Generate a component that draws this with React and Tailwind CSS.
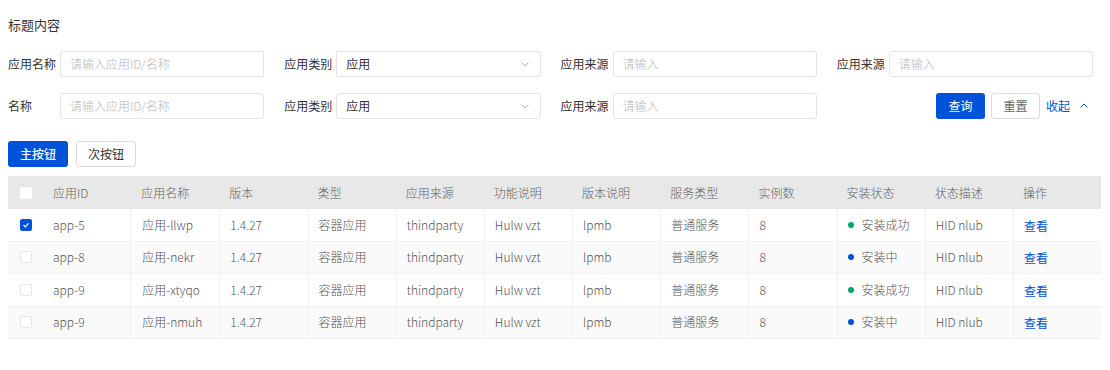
import React from "react";

const rows = [
  { id: "app-5", name: "应用-llwp", checked: true, status: "安装成功", ok: true },
  { id: "app-8", name: "应用-nekr", checked: false, status: "安装中", ok: false },
  { id: "app-9", name: "应用-xtyqo", checked: false, status: "安装成功", ok: true },
  { id: "app-9", name: "应用-nmuh", checked: false, status: "安装中", ok: false },
];

const headers = ["应用ID", "应用名称", "版本", "类型", "应用来源", "功能说明", "版本说明", "服务类型", "实例数", "安装状态", "状态描述", "操作"];

const Chevron = ({ up }) => (
  <svg width="12" height="12" viewBox="0 0 12 12" fill="none" className="shrink-0">
    <path d={up ? "M2.5 7.5L6 4l3.5 3.5" : "M2.5 4.5L6 8l3.5-3.5"} stroke={up ? "#0052d9" : "#b5b5b5"} strokeWidth="1" />
  </svg>
);

const Field = ({ label, placeholder, value, select }) => (
  <div className="flex items-center">
    <span className="w-[52px] shrink-0 text-[12px] text-[#333]">{label}</span>
    <div className="flex-1 h-[26px] border border-[#e3e3e3] rounded-[3px] px-[9px] flex items-center justify-between text-[12px]">
      {select ? (
        <>
          <span className="text-[#333]">{value}</span>
          <Chevron />
        </>
      ) : (
        <span className="text-[#b8b8b8] font-light">{placeholder}</span>
      )}
    </div>
  </div>
);

const Checkbox = ({ checked, header }) =>
  checked ? (
    <div className="w-[12px] h-[12px] rounded-[2px] bg-[#0052d9] flex items-center justify-center">
      <svg width="8" height="8" viewBox="0 0 8 8" fill="none">
        <path d="M1.5 4l1.8 1.8L6.6 2.4" stroke="white" strokeWidth="1.2" />
      </svg>
    </div>
  ) : (
    <div className={`w-[12px] h-[12px] rounded-[2px] bg-white ${header ? "border border-white" : "border border-[#e6e6e6]"}`} />
  );

export default function App() {
  return (
    <div className="w-[1110px] h-[370px] bg-white px-[8px] pt-[16px]" style={{ fontFamily: '"Noto Sans CJK SC", "Noto Sans", sans-serif' }}>
      <div className="text-[13px] text-[#333] leading-[18px]">标题内容</div>

      <div className="mt-[17px] grid grid-cols-4 gap-x-[20px] gap-y-[16px] w-[1085px]">
        <Field label="应用名称" placeholder="请输入应用ID/名称" />
        <Field label="应用类别" value="应用" select />
        <Field label="应用来源" placeholder="请输入" />
        <Field label="应用来源" placeholder="请输入" />
        <Field label="名称" placeholder="请输入应用ID/名称" />
        <Field label="应用类别" value="应用" select />
        <Field label="应用来源" placeholder="请输入" />
        <div className="flex items-center justify-end gap-[6px] pr-[3px]">
          <button className="h-[26px] w-[49px] rounded-[3px] bg-[#0052d9] text-white text-[12px]">查询</button>
          <button className="h-[26px] w-[49px] rounded-[3px] border border-[#dcdcdc] text-[#666] text-[12px]">重置</button>
          <button className="flex items-center gap-[8px] text-[#0052d9] text-[12px]">
            收起 <Chevron up />
          </button>
        </div>
      </div>

      <div className="mt-[22px] flex gap-[8px]">
        <button className="h-[26px] w-[60px] rounded-[3px] bg-[#0052d9] text-white text-[12px] font-medium">主按钮</button>
        <button className="h-[26px] w-[60px] rounded-[3px] border border-[#dcdcdc] text-[#333] text-[12px]">次按钮</button>
      </div>

      <div className="mt-[9px] w-[1093px] text-[12px] font-light">
        <div className="flex h-[33px] bg-[#e8e8e8] text-[#666]">
          <div className="w-[35px] shrink-0 flex items-center justify-center">
            <Checkbox header />
          </div>
          {headers.map((h) => (
            <div key={h} className="flex-1 flex items-center pl-[10px]">{h}</div>
          ))}
        </div>
        {rows.map((r, i) => (
          <div key={i} className={`flex h-[32.5px] border-b border-[#f0f0f0] text-[#555] ${i % 2 ? "bg-[#fafafa]" : "bg-white"}`}>
            <div className="w-[35px] shrink-0 flex items-center justify-center">
              <Checkbox checked={r.checked} />
            </div>
            <div className="flex-1 flex items-center pl-[10px] border-r border-[#f0f0f0]">{r.id}</div>
            <div className="flex-1 flex items-center pl-[11px] border-r border-[#f0f0f0]">{r.name}</div>
            <div className="flex-1 flex items-center pl-[10px] border-r border-[#f0f0f0]">1.4.27</div>
            <div className="flex-1 flex items-center pl-[10px] border-r border-[#f0f0f0]">容器应用</div>
            <div className="flex-1 flex items-center pl-[10px] border-r border-[#f0f0f0]">thindparty</div>
            <div className="flex-1 flex items-center pl-[10px] border-r border-[#f0f0f0]">Hulw vzt</div>
            <div className="flex-1 flex items-center pl-[10px] border-r border-[#f0f0f0]">lpmb</div>
            <div className="flex-1 flex items-center pl-[10px] border-r border-[#f0f0f0]">普通服务</div>
            <div className="flex-1 flex items-center pl-[10px] border-r border-[#f0f0f0]">8</div>
            <div className="flex-1 flex items-center pl-[10px] gap-[8px] border-r border-[#f0f0f0]">
              <span className={`w-[6px] h-[6px] rounded-full ${r.ok ? "bg-[#00a870]" : "bg-[#0052d9]"}`} />
              {r.status}
            </div>
            <div className="flex-1 flex items-center pl-[10px] border-r border-[#f0f0f0]">HID nlub</div>
            <div className="flex-1 flex items-center pl-[10px] text-[#0052d9] font-normal pt-[2px]">查看</div>
          </div>
        ))}
      </div>
    </div>
  );
}
